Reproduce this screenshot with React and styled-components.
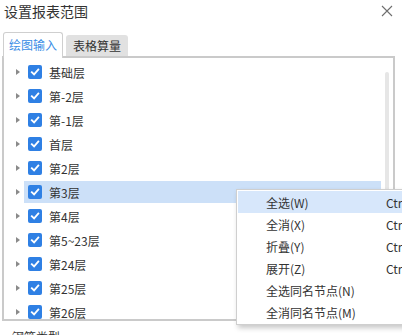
import React from "react";
import styled, { createGlobalStyle } from "styled-components";

const GlobalStyle = createGlobalStyle`
  html, body { margin: 0; padding: 0; background: #fff; }
  body { font-family: "Noto Sans CJK SC", "Noto Sans", sans-serif; }
  * { box-sizing: border-box; }
`;

const Window = styled.div`
  position: relative;
  width: 402px;
  height: 335px;
  overflow: hidden;
  background: #fff;
  color: #333;
`;

const Header = styled.div`
  display: flex;
  align-items: center;
  justify-content: space-between;
  height: 22px;
  padding: 0 9px 0 4px;
`;

const Title = styled.div`
  font-size: 14px;
  line-height: 22px;
  color: #333;
`;

const CloseButton = styled.div`
  display: flex;
  width: 12px;
  height: 12px;
`;

const Tabs = styled.div`
  display: flex;
  align-items: flex-end;
  gap: 3px;
  height: 26px;
  margin-top: 10px;
  padding-left: 3px;
  margin-bottom: -2px;
  position: relative;
  z-index: 1;
`;

const Tab = styled.div`
  display: flex;
  align-items: center;
  font-size: 12px;
  white-space: nowrap;
  border-radius: 3px 3px 0 0;
  ${(p) =>
    p.$active
      ? `
    height: 26px;
    padding: 0 5px;
    background: #fff;
    color: #3a8ee6;
    border: 1px solid #cfcfcf;
    border-bottom: none;
    padding-bottom: 2px;
  `
      : `
    height: 21px;
    padding: 0 7px;
    background: #e1e1e1;
    color: #333;
    margin-bottom: 2px;
  `}
`;

const Panel = styled.div`
  display: flex;
  height: 265px;
  margin: 0 7px 0 2px;
  border: 2px solid #cacaca;
  overflow: hidden;
`;

const TreeList = styled.div`
  flex: 1;
  padding-top: 2px;
  overflow: hidden;
`;

const Row = styled.div`
  display: flex;
  align-items: center;
  height: 24px;
`;

const Arrow = styled.span`
  width: 0;
  height: 0;
  margin-left: 12px;
  margin-right: 4px;
  border-left: 4px solid #8a8a8a;
  border-top: 3.5px solid transparent;
  border-bottom: 3.5px solid transparent;
`;

const Label = styled.div`
  flex: 1;
  display: flex;
  align-items: center;
  gap: 7px;
  height: 22px;
  padding-left: 4px;
  font-size: 12px;
  color: #333;
  background: ${(p) => (p.$selected ? "#cce0f8" : "transparent")};
`;

const Check = styled.span`
  display: flex;
  align-items: center;
  justify-content: center;
  width: 14px;
  height: 14px;
  border-radius: 2px;
  background: #2f80e4;
`;

const ScrollTrack = styled.div`
  width: 12px;
  padding: 14px 4px 0 4px;
`;

const ScrollThumb = styled.div`
  width: 4px;
  height: 250px;
  border-radius: 2px;
  background: #e6e6e6;
`;

const Footer = styled.div`
  margin-top: 8px;
  padding-left: 12px;
  font-size: 12px;
  line-height: 16px;
  color: #333;
`;

const Menu = styled.div`
  position: absolute;
  left: 236px;
  top: 189px;
  width: 200px;
  padding: 1px;
  background: #fff;
  border: 1px solid #cfcfcf;
  box-shadow: 2px 3px 5px rgba(0, 0, 0, 0.22);
  z-index: 5;
`;

const MenuItem = styled.div`
  display: flex;
  align-items: center;
  height: 22px;
  padding-left: 28px;
  font-size: 12px;
  color: #333;
  white-space: nowrap;
  background: ${(p) => (p.$hover ? "#d7e7fb" : "transparent")};
`;

const MenuLabel = styled.span`
  width: 120px;
`;

const Shortcut = styled.span``;

const floors = [
  "基础层",
  "第-2层",
  "第-1层",
  "首层",
  "第2层",
  "第3层",
  "第4层",
  "第5~23层",
  "第24层",
  "第25层",
  "第26层",
];

const menuItems = [
  { label: "全选(W)", key: "Ctrl+W" },
  { label: "全消(X)", key: "Ctrl+X" },
  { label: "折叠(Y)", key: "Ctrl+Y" },
  { label: "展开(Z)", key: "Ctrl+Z" },
  { label: "全选同名节点(N)", key: "" },
  { label: "全消同名节点(M)", key: "" },
];

const CheckMark = () => (
  <svg width="10" height="10" viewBox="0 0 10 10">
    <path d="M1.8 5.2 L4.1 7.4 L8.3 2.6" fill="none" stroke="#fff" strokeWidth="1.8" strokeLinecap="square" />
  </svg>
);

export default function App() {
  return (
    <>
      <GlobalStyle />
      <Window>
        <Header>
          <Title>设置报表范围</Title>
          <CloseButton>
            <svg width="12" height="12" viewBox="0 0 12 12">
              <path d="M1 1 L11 11 M11 1 L1 11" stroke="#6e6e6e" strokeWidth="1.1" fill="none" />
            </svg>
          </CloseButton>
        </Header>
        <Tabs>
          <Tab $active>绘图输入</Tab>
          <Tab>表格算量</Tab>
        </Tabs>
        <Panel>
          <TreeList>
            {floors.map((f, i) => (
              <Row key={f}>
                <Arrow />
                <Label $selected={i === 5}>
                  <Check>
                    <CheckMark />
                  </Check>
                  {f}
                </Label>
              </Row>
            ))}
          </TreeList>
          <ScrollTrack>
            <ScrollThumb />
          </ScrollTrack>
        </Panel>
        <Footer>钢筋类型</Footer>
        <Menu>
          {menuItems.map((m, i) => (
            <MenuItem key={m.label} $hover={i === 0}>
              <MenuLabel>{m.label}</MenuLabel>
              <Shortcut>{m.key}</Shortcut>
            </MenuItem>
          ))}
        </Menu>
      </Window>
    </>
  );
}
